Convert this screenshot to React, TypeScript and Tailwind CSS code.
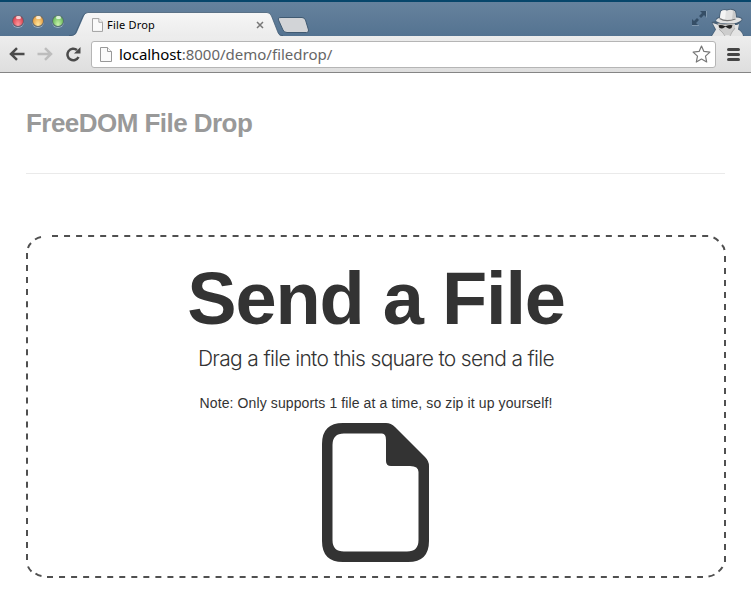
import React from "react";

function Light({ tone }: { tone: string }) {
  return (
    <span
      className={`flex h-3 w-3 justify-center rounded-full border border-[#4d5f70]/80 shadow-[0_1px_0_#9bb0c4] ${tone}`}
    >
      <span className="h-[3px] w-[5px] rounded-full bg-white/70" />
    </span>
  );
}

function PageIcon({ className }: { className: string }) {
  return (
    <svg viewBox="0 0 12 15" className={className} fill="#fafafa" stroke="#999" strokeWidth="1">
      <path d="M.5.5h7l4 4v10H.5z" />
      <path d="M7.5.5v4h4" />
    </svg>
  );
}

function Incognito() {
  return (
    <svg viewBox="0 0 34 28" className="h-7 w-[34px] shrink-0">
      <path
        d="M9 3Q11 .5 16 1.500Q22-.5 25 3L26 8.500Q32 9 31.500 12L27 16.500L28 21Q32 24 33 28H0L4 22L.5 14L5 13Q4 10 8 9Z"
        fill="#3e5062"
        opacity=".6"
      />
      <path d="M1.500 15L8 17H26L28 16L27 21.500Q31.500 24 32 28H1L5 21.500Z" fill="#e4e4e4" />
      <path d="M7 16H24V21L19 27H14L8 22Z" fill="#cdcdcd" />
      <path d="M10 3.500Q12 1.800 16 2.500Q21 .8 24 3.500L25 9.500Q31 9.500 30.500 12Q26 16 17 15.500Q8 15.500 5 13Q5.500 10.500 9 9.800Z" fill="#e2e2e2" />
      <path d="M10 3.500Q12 1.800 15 2.500L14 11.500Q10.500 11 9 9.500Z" fill="#f4f4f4" />
      <path d="M22 2.500L24 3.500L25 9.500L21 11.500Z" fill="#c9c9c9" />
      <path d="M8.500 10.500Q15 14.500 24.500 11" fill="none" stroke="#777" strokeWidth="1.200" />
      <path d="M6.500 15.500Q14 17.500 23.500 15.500" fill="none" stroke="#999" strokeWidth="1" />
      <path d="M7.500 17.300q3.500-.6 6 .7h1.500q3-1.300 6.500-.7l-1 2.800q-2.500 1.300-4.800-.5l-.8-.8h-.8l-.8.8q-2.500 1.800-5 .2z" fill="#252525" />
      <path d="M8 21l4 4 2 3M24 20l-3 4-2 4" stroke="#b0b0b0" fill="none" />
    </svg>
  );
}

function TitleBar() {
  return (
    <div className="flex h-9 border-t-2 border-[#07466b] bg-linear-to-b from-[#66829d] to-[#547391]">
      <div className="flex w-[69px] items-center gap-2 pt-[3px] pl-3">
        <Light tone="bg-radial-[at_50%_90%] from-[#ff9ba0] to-[#d22d3c]" />
        <Light tone="bg-radial-[at_50%_90%] from-[#ffe9a0] to-[#e08d2c]" />
        <Light tone="bg-radial-[at_50%_90%] from-[#cbf5ac] to-[#52aa49]" />
      </div>
      <div className="relative mt-[10px] h-6 w-[214px] shrink-0">
        <svg viewBox="0 0 214 24" className="absolute inset-0 h-6 w-[214px]">
          <defs>
            <linearGradient id="tab" x2="0" y2="1">
              <stop stopColor="#f6f6f6" />
              <stop offset="1" stopColor="#ececec" />
            </linearGradient>
          </defs>
          <path
            d="M0 24C6 24 7 22 8 20L15 4Q16.500 .5 19 .5H198Q201 .5 202.500 4L208 18C209.500 22 210 24 214 24Z"
            fill="url(#tab)"
          />
          <path
            d="M0 23.500C6 23.500 6 22 7 20L14 4Q16 .5 19 .5H198Q201 .5 202.500 4L208 18C209.500 22 210 23.500 214 23.500"
            fill="none"
            stroke="#405a72"
            strokeOpacity=".75"
          />
        </svg>
        <div className="relative flex h-6 items-center pl-[23px]">
          <PageIcon className="mt-px h-[14px] w-[11px]" />
          <span className="ml-1 w-[149px] pt-px font-['Noto_Sans',sans-serif] text-[11px] leading-6 tracking-[0.200px] text-black">
            File Drop
          </span>
          <svg viewBox="0 0 8 8" className="mt-px h-2 w-2" stroke="#777" strokeWidth="1.500">
            <path d="M1 1l6 6M7 1L1 7" />
          </svg>
        </div>
      </div>
      <svg viewBox="0 0 33 17" className="mt-[15px] -ml-[6px] h-[17px] w-[33px] shrink-0">
        <path
          d="M4 .5H25Q27.500 .5 28.500 3L31.500 13Q32 15.500 29.500 15.500H10Q7 15.500 6 13L1.500 3Q.5 .5 4 .5Z"
          fill="#d2d4d7"
          stroke="#405a72"
        />
      </svg>
      <div className="ml-auto flex items-start">
        <svg viewBox="0 0 15 15" className="mt-[9px] mr-1 h-[15px] w-[15px]" fill="#354e66">
          <path d="M8 0h6v6l-2-2-3 3-2-2 3-3zM0 8l2 2 3-3 2 2-3 3 2 2H0z" />
          <path d="M14.500 0v6.500M0 14.500h7" stroke="#91a6b9" fill="none" strokeWidth=".7" />
        </svg>
        <div className="mt-[6px] mr-[6px]">
          <Incognito />
        </div>
      </div>
    </div>
  );
}

function Toolbar() {
  return (
    <div className="flex h-[37px] items-center border-b border-[#858585] bg-linear-to-b from-[#ededed] to-[#dedede]">
      <svg viewBox="0 0 16 14" className="ml-[9px] h-[14px] w-4" fill="none" stroke="#4b4b4b" strokeWidth="2.500">
        <path d="M15.500 7H2M8 1.200L2 7l6 5.800" />
      </svg>
      <svg viewBox="0 0 16 14" className="ml-3 h-[14px] w-4" fill="none" stroke="#bdbdbd" strokeWidth="2.500">
        <path d="M.5 7H14M8 1.200L14 7l-6 5.800" />
      </svg>
      <svg viewBox="0 0 16 16" className="ml-3 h-4 w-4">
        <path d="M13.500 11A5.800 5.800 0 1 1 12 4" fill="none" stroke="#4b4b4b" strokeWidth="2.500" />
        <path d="M15.500 1v6.500H9z" fill="#4b4b4b" />
      </svg>
      <div className="ml-[10px] flex h-[27px] w-[625px] items-center rounded-[3px] border border-[#b5b5b5] bg-white pr-[4px] pl-2">
        <PageIcon className="h-[15px] w-3" />
        <div className="ml-[7px] font-['Noto_Sans',sans-serif] text-[15px] leading-[25px] whitespace-nowrap text-[#666]">
          <span className="tracking-[-0.080px] text-black">localhost</span>:8000/demo/filedrop/
        </div>
        <svg viewBox="0 0 19 18" className="ml-auto h-[18px] w-[19px]" fill="#fff" stroke="#777" strokeWidth="1.200" strokeLinejoin="round">
          <path d="M9.500 1l2.400 5.400 6 .7-4.400 4 1.200 5.900-5.200-3-5.200 3 1.200-5.900-4.400-4 6-.7z" />
        </svg>
      </div>
      <div className="ml-[11px] flex flex-col gap-[2px]">
        <span className="h-[3px] w-[13px] rounded-full bg-[#454545]" />
        <span className="h-[3px] w-[13px] rounded-full bg-[#454545]" />
        <span className="h-[3px] w-[13px] rounded-full bg-[#454545]" />
      </div>
    </div>
  );
}

function DashedFrame() {
  return (
    <svg viewBox="0 0 700 343" className="absolute inset-0 h-[343px] w-[700px]" fill="none" stroke="#505050" strokeWidth="2">
      <path d="M26 1H683" strokeDasharray="6 6.040" />
      <path d="M699 21V328" strokeDasharray="6 6" />
      <path d="M21 342H677" strokeDasharray="6 6.040" />
      <path d="M1 18V326" strokeDasharray="6 6.040" />
      <path d="M9 4.500Q12 2.500 15 2M2 13Q3 10 5 8M687.500 2.500Q690 3.500 692.500 6M696 10Q698 12 698.500 15M2 331.500Q3 334 5.500 336.500M9.500 338.500Q12 340.500 15.500 341M682.500 341.500Q686 341 688.500 339.500M692.500 336.500Q695 334.500 696.500 332" />
    </svg>
  );
}

export default function App() {
  return (
    <div className="h-[589px] w-[751px] overflow-hidden bg-white">
      <TitleBar />
      <Toolbar />
      <main className="px-[26px] pt-[30px] font-['Liberation_Sans',Arial,sans-serif] text-[#333]">
        <h1 className="h-[71px] border-b border-[#eaeaea] text-[26px] leading-10 font-bold tracking-[-0.540px] text-[#999]">
          FreeDOM File Drop
        </h1>
        <section className="relative mt-[61px] flex h-[343px] w-[700px] flex-col items-center">
          <DashedFrame />
          <h2 className="mt-[24px] text-[74px] leading-[80px] font-bold tracking-[-1.200px] whitespace-nowrap">Send a File</h2>
          <p className="mt-[5px] font-[Inter,sans-serif] text-[21px] leading-[30px] font-light tracking-[-0.670px] whitespace-nowrap">
            Drag a file into this square to send a file
          </p>
          <p className="mt-[19px] text-[14px] leading-5 tracking-[0.110px] whitespace-nowrap">
            Note: Only supports 1 file at a time, so zip it up yourself!
          </p>
          <svg viewBox="0 0 107 139" className="mt-[10px] mr-px h-[139px] w-[107px]">
            <path
              fill="#333"
              fillRule="evenodd"
              d="M21 0H64Q69 0 73 4L103 34Q107 38 107 43V118Q107 139 86 139H21Q0 139 0 118V21Q0 0 21 0ZM22 10.500Q10.500 10.500 10.500 22V117Q10.500 128.500 22 128.500H85Q96.500 128.500 96.500 117V49Q96.500 43 88 43H69Q64 43 64 38V17Q64 10.500 60 10.500Z"
            />
          </svg>
        </section>
      </main>
    </div>
  );
}
